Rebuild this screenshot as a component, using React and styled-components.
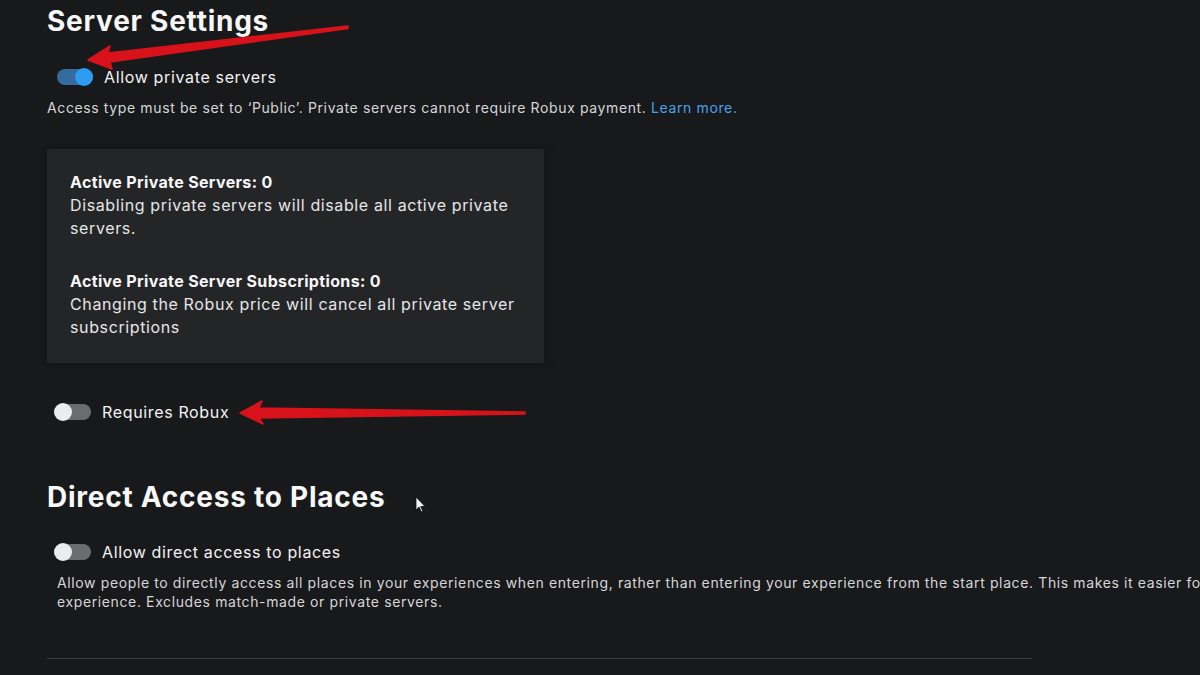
import React from "react";
import styled, { createGlobalStyle } from "styled-components";

const Global = createGlobalStyle`
  html, body { margin: 0; padding: 0; background: #18191b; overflow: hidden; }
  body { font-family: "Inter", "Open Sans", sans-serif; color: #f2f2f3; }
  #root { width: 1200px; height: 675px; overflow: hidden; }
`;

const Page = styled.div`
  position: relative;
  width: 1200px;
  height: 675px;
  padding-left: 47px;
  padding-top: 1px;
  box-sizing: border-box;
  overflow: hidden;
`;

const Heading = styled.h2`
  margin: ${(p) => p.$mt || 0}px 0 0;
  font-size: 28px;
  line-height: 40px;
  font-weight: 700;
  letter-spacing: 0.75px;
  color: #f7f7f8;
`;

const ToggleRow = styled.div`
  display: flex;
  align-items: center;
  height: 24px;
  margin-top: ${(p) => p.$mt}px;
  padding-left: ${(p) => p.$indent}px;
  gap: 11px;
`;

const Track = styled.span`
  position: relative;
  display: inline-block;
  flex: none;
  width: 36px;
  height: 16px;
  border-radius: 8px;
  background: ${(p) => (p.$on ? "#356c9f" : "#6b6c6e")};
`;

const Knob = styled.span`
  position: absolute;
  top: -1px;
  left: ${(p) => (p.$on ? "18px" : "-1px")};
  width: 18px;
  height: 18px;
  border-radius: 50%;
  background: ${(p) => (p.$on ? "#2d9cf2" : "#ececec")};
`;

const Label = styled.span`
  font-size: 16px;
  font-weight: 400;
  letter-spacing: 0.65px;
  color: #f3f3f4;
`;

const Desc = styled.p`
  margin: ${(p) => p.$mt}px 0 0;
  padding-left: ${(p) => p.$indent || 0}px;
  font-size: 14px;
  line-height: ${(p) => p.$lh || 20}px;
  letter-spacing: 0.62px;
  color: #d6d6d8;
  width: ${(p) => p.$w || "auto"};
  white-space: ${(p) => (p.$nowrap ? "nowrap" : "normal")};
`;

const Link = styled.a`
  color: #4ba2ea;
  text-decoration: none;
`;

const InfoBox = styled.div`
  margin-top: 31px;
  width: 497px;
  box-sizing: border-box;
  background: #242527;
  padding: 22px 23px 24px;
  box-shadow: 0 0 10px rgba(0, 0, 0, 0.35);
`;

const InfoBlock = styled.div`
  margin-top: ${(p) => p.$mt || 0}px;
  font-size: 16px;
  line-height: 23px;
  letter-spacing: 0.62px;
  color: #e6e6e8;
`;

const InfoTitle = styled.div`
  font-weight: 700;
  letter-spacing: 0.35px;
  color: #f7f7f8;
`;

const Divider = styled.hr`
  margin: 47px 0 0;
  width: 985px;
  border: none;
  border-top: 1px solid #3c3d40;
`;

const Overlay = styled.svg`
  position: absolute;
  left: 0;
  top: 0;
  pointer-events: none;
`;

function Toggle({ on }) {
  return (
    <Track $on={on}>
      <Knob $on={on} />
    </Track>
  );
}

export default function App() {
  return (
    <>
      <Global />
      <Page>
        <Heading>Server Settings</Heading>
        <ToggleRow $mt={24} $indent={10}>
          <Toggle on />
          <Label>Allow private servers</Label>
        </ToggleRow>
        <Desc $mt={9}>
          Access type must be set to ‘Public’. Private servers cannot require Robux payment.{" "}
          <Link>Learn more.</Link>
        </Desc>
        <InfoBox>
          <InfoBlock>
            <InfoTitle>Active Private Servers: 0</InfoTitle>
            Disabling private servers will disable all active private servers.
          </InfoBlock>
          <InfoBlock $mt={30}>
            <InfoTitle>Active Private Server Subscriptions: 0</InfoTitle>
            Changing the Robux price will cancel all private server subscriptions
          </InfoBlock>
        </InfoBox>
        <ToggleRow $mt={37} $indent={8}>
          <Toggle />
          <Label>Requires Robux</Label>
        </ToggleRow>
        <Heading $mt={53}>Direct Access to Places</Heading>
        <ToggleRow $mt={23} $indent={8}>
          <Toggle />
          <Label>Allow direct access to places</Label>
        </ToggleRow>
        <Desc $mt={9} $indent={10} $lh={19} $nowrap>
          Allow people to directly access all places in your experiences when entering, rather than entering your experience from the start place. This makes it easier fo
          <br />
          experience. Excludes match-made or private servers.
        </Desc>
        <Divider />
        <Overlay width="1200" height="675" viewBox="0 0 1200 675">
          <g fill="#d8121a" stroke="#d8121a" strokeLinejoin="round" strokeWidth="1.5">
            <polygon points="88,60 110,46 108,53 348,26 348,28.5 110,62 112,69" />
            <polygon points="240,413 262,401 259,408 525,412 525,414 259,418 263,424" />
          </g>
          <path
            d="M416 497 L416 510 L419 507 L421.5 512 L423 511.3 L420.7 506.5 L425 506.5 Z"
            fill="#f5f5f5"
            stroke="#111"
            strokeWidth="0.8"
          />
        </Overlay>
      </Page>
    </>
  );
}
